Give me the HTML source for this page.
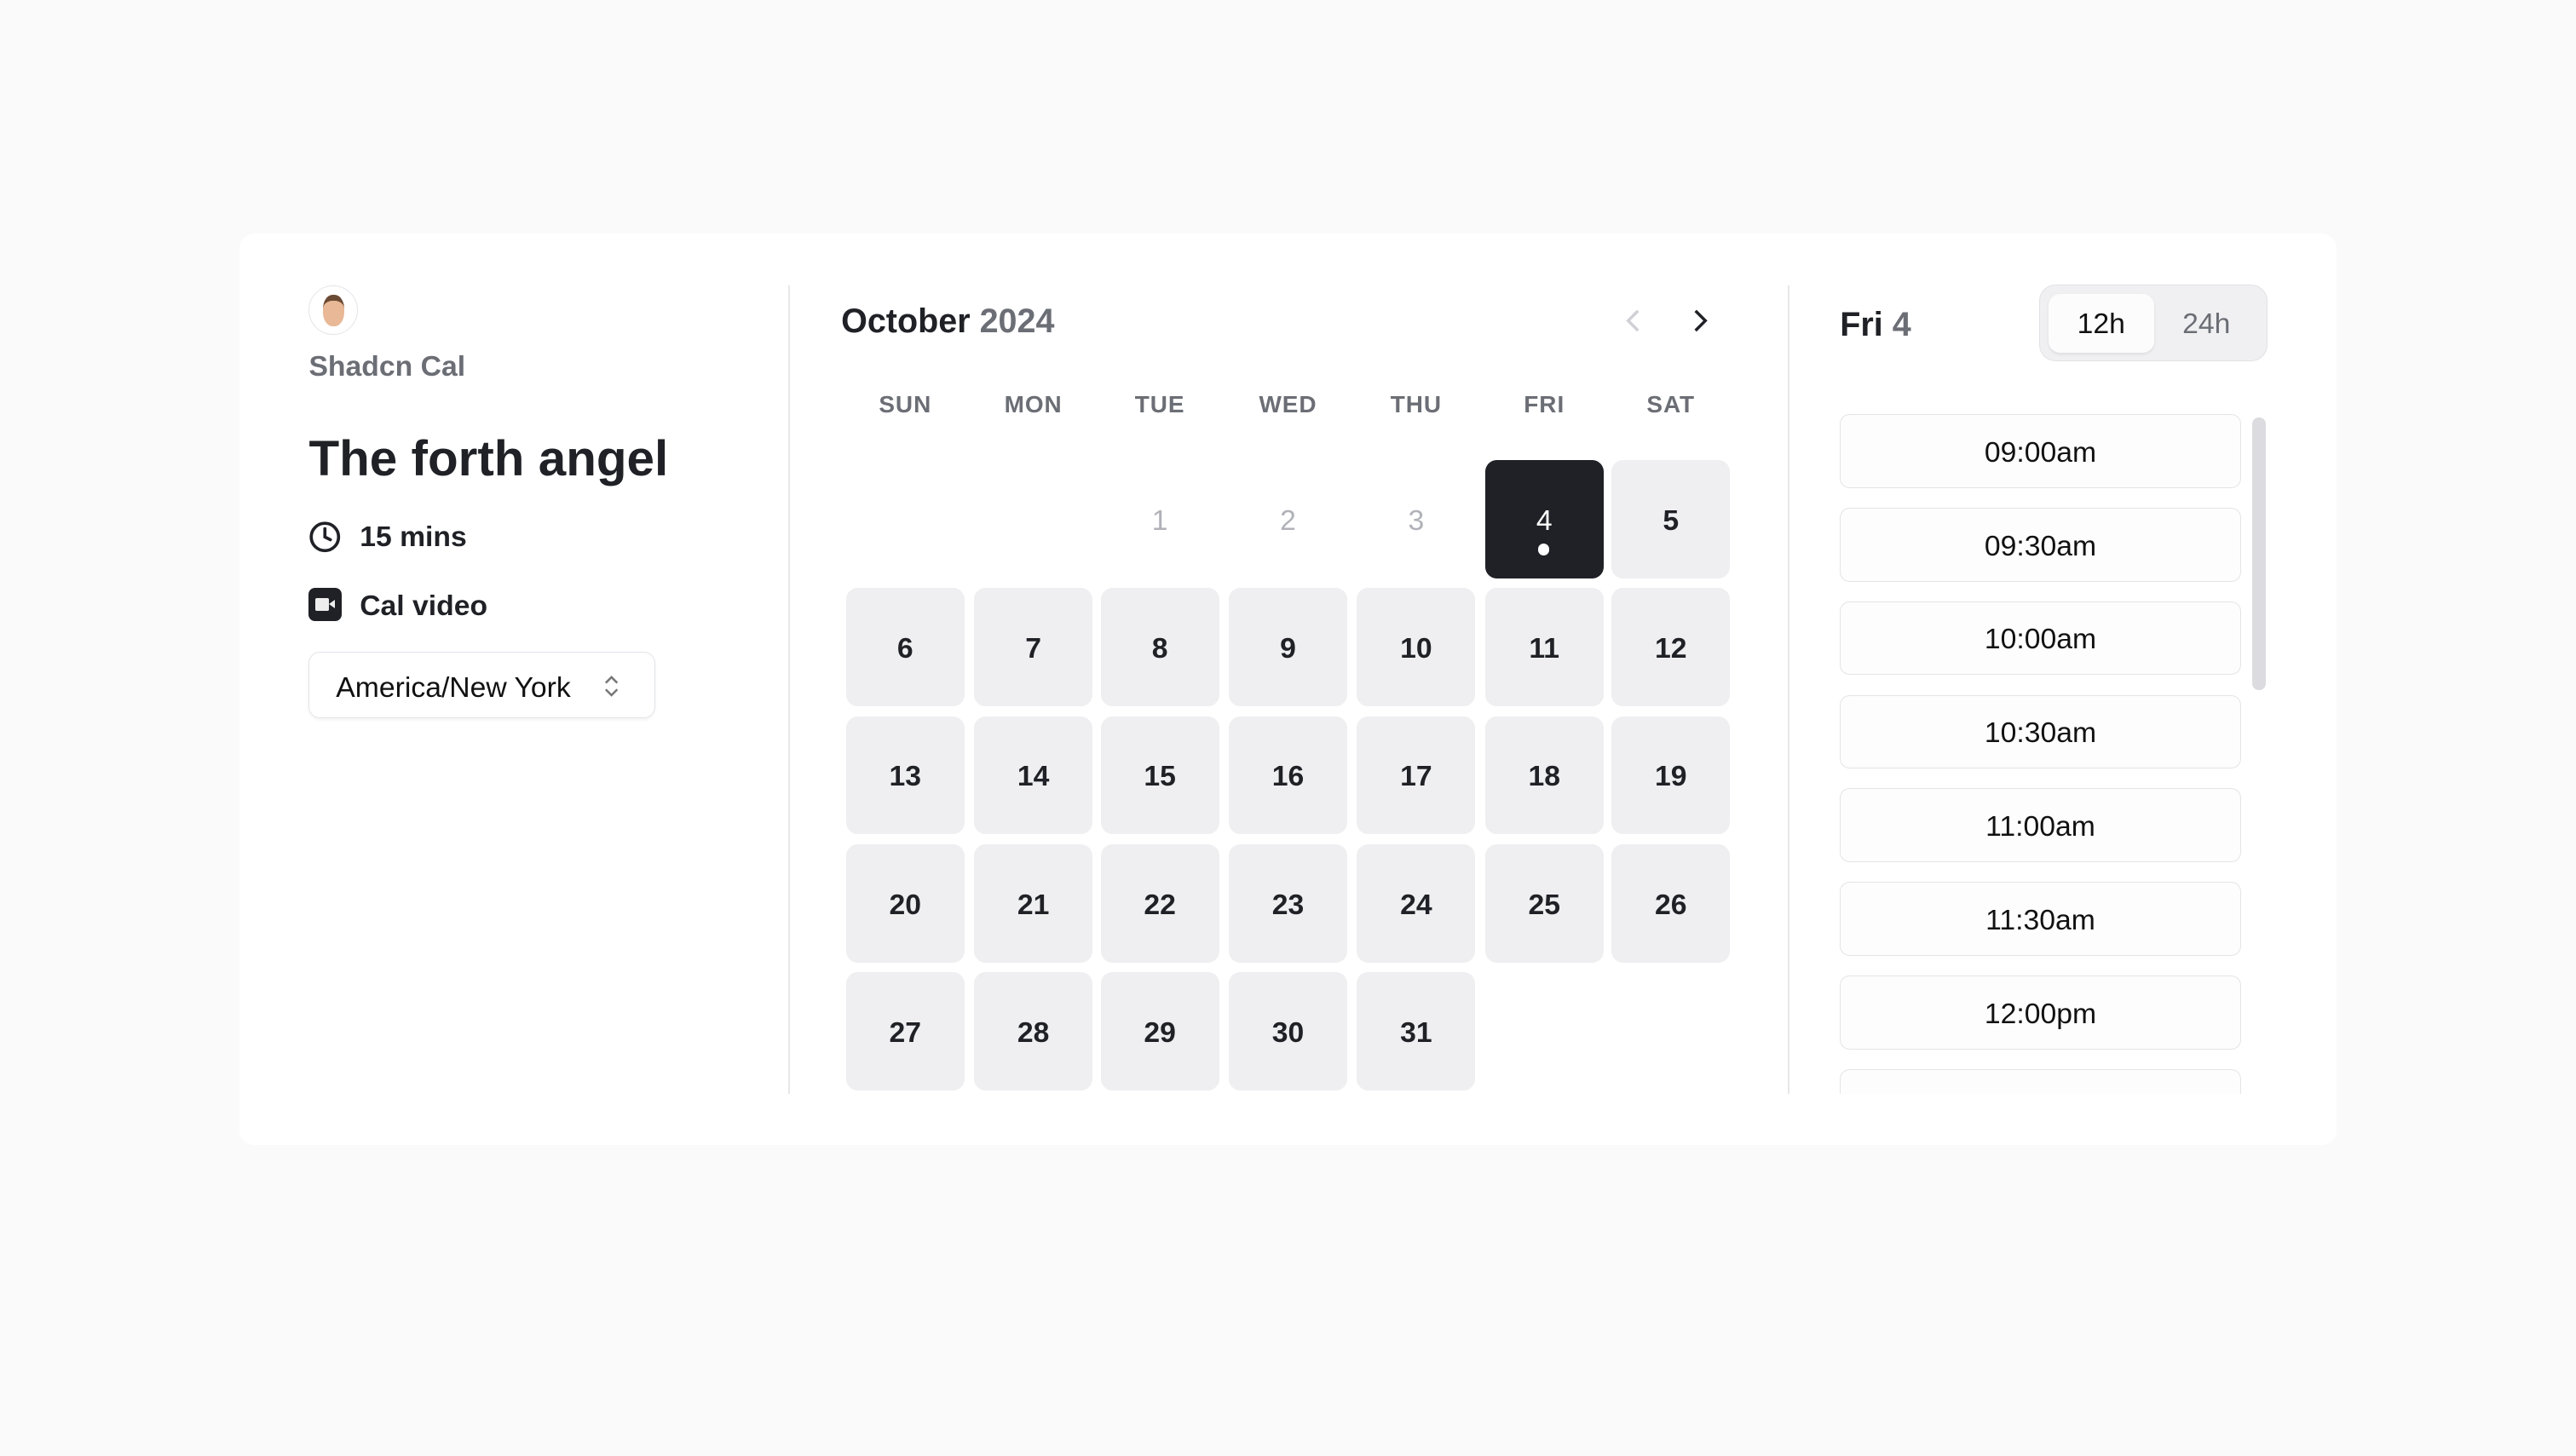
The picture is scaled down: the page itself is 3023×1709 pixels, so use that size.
<!DOCTYPE html>
<html><head><meta charset="utf-8"><style>
html,body{margin:0;padding:0;background:#fafafa;width:3023px;height:1709px;overflow:hidden}
#z{zoom:1.92793;width:1568px;height:886px;position:relative;font-family:"Liberation Sans",sans-serif;color:#1f2126}
.a{position:absolute}
.card{left:146px;top:142px;width:1276px;height:555px;background:#fff;border-radius:9px}
.cell{position:absolute;width:72px;height:72px;border-radius:7px;background:#efeff1;display:flex;align-items:center;justify-content:center;font-size:17.5px;font-weight:bold;color:#1f2126;padding-top:2px;box-sizing:border-box}
.hd{position:absolute;top:238px;width:72px;text-align:center;font-size:14.5px;font-weight:bold;color:#6b6e75;letter-spacing:.5px}
.slot{position:absolute;left:1120px;width:243px;height:44px;border:1px solid #e4e4e7;border-radius:6px;background:#fdfdfd;display:flex;align-items:center;justify-content:center;font-size:17.5px;color:#111;padding-top:2px;box-sizing:content-box}
</style></head><body><div id="z">
<div class="a card"></div>
<div class="a" style="left:188px;top:174px;width:29px;height:29px;border:1px solid #e2e4e8;border-radius:50%;background:#fff;display:flex;align-items:center;justify-content:center">
<div style="width:13px;height:19px;border-radius:45%;background:#e9b896;border-top:4px solid #6b4a34;box-sizing:border-box"></div></div>
<div class="a" style="left:188px;top:213px;font-size:17.5px;font-weight:bold;color:#6b6e75">Shadcn Cal</div>
<div class="a" style="left:188px;top:262px;font-size:30.3px;font-weight:bold;color:#1f2126">The forth angel</div>
<svg class="a" style="left:188px;top:317px" width="20" height="20" viewBox="0 0 24 24" fill="none" stroke="#1f2126" stroke-width="2.3" stroke-linecap="round"><circle cx="12" cy="12" r="10"/><path d="M12 6v6l4 2"/></svg>
<div class="a" style="left:219px;top:317px;font-size:17.5px;font-weight:bold">15 mins</div>
<div class="a" style="left:188px;top:358px;width:20px;height:20px;border-radius:4px;background:#1f2126"><div class="a" style="left:4px;top:6px;width:8px;height:8px;background:#eee;border-radius:1px"></div><div class="a" style="left:12px;top:7px;width:0;height:0;border-top:3px solid transparent;border-bottom:3px solid transparent;border-right:4px solid #eee"></div></div>
<div class="a" style="left:219px;top:359px;font-size:17.5px;font-weight:bold">Cal video</div>
<div class="a" style="left:188px;top:397px;width:210px;height:39px;border:1px solid #e2e4e8;border-radius:7px;box-shadow:0 1px 2px rgba(0,0,0,.05)"><span class="a" style="left:16px;top:11px;font-size:17.5px;color:#111">America/New York</span>
<svg class="a" style="left:178px;top:12px" width="11" height="16" viewBox="0 0 11 16" fill="none" stroke="#777" stroke-width="1.3"><path d="M2 6l3.5-3.5L9 6M2 10l3.5 3.5L9 10"/></svg></div>
<div class="a" style="left:480px;top:174px;width:1px;height:492px;background:#e7e7ea"></div>
<div class="a" style="left:1088px;top:174px;width:1px;height:492px;background:#e7e7ea"></div>
<div class="a" style="left:512px;top:184px;font-size:20.5px;font-weight:bold">October <span style="color:#6b6e75">2024</span></div>
<svg class="a" style="left:987px;top:187px" width="14" height="16" viewBox="0 0 14 16" fill="none" stroke="#d0d0d5" stroke-width="1.8"><path d="M10 2L4 8l6 6"/></svg>
<svg class="a" style="left:1028px;top:187px" width="14" height="16" viewBox="0 0 14 16" fill="none" stroke="#1f2126" stroke-width="1.8"><path d="M4 2l6 6-6 6"/></svg>
<div class="hd" style="left:515px">SUN</div><div class="hd" style="left:593px">MON</div><div class="hd" style="left:670px">TUE</div><div class="hd" style="left:748px">WED</div><div class="hd" style="left:826px">THU</div><div class="hd" style="left:904px">FRI</div><div class="hd" style="left:981px">SAT</div>
<div class="cell" style="left:670px;top:280px;background:none;color:#b0b2b8;font-weight:normal">1</div>
<div class="cell" style="left:748px;top:280px;background:none;color:#b0b2b8;font-weight:normal">2</div>
<div class="cell" style="left:826px;top:280px;background:none;color:#b0b2b8;font-weight:normal">3</div>
<div class="cell" style="left:904px;top:280px;background:#1f2126;color:#fff;font-weight:normal">4<div class="a" style="left:32px;top:51px;width:7px;height:7px;border-radius:50%;background:#fff"></div></div>
<div class="cell" style="left:981px;top:280px">5</div>
<div class="cell" style="left:515px;top:358px">6</div><div class="cell" style="left:593px;top:358px">7</div><div class="cell" style="left:670px;top:358px">8</div><div class="cell" style="left:748px;top:358px">9</div><div class="cell" style="left:826px;top:358px">10</div><div class="cell" style="left:904px;top:358px">11</div><div class="cell" style="left:981px;top:358px">12</div>
<div class="cell" style="left:515px;top:436px">13</div><div class="cell" style="left:593px;top:436px">14</div><div class="cell" style="left:670px;top:436px">15</div><div class="cell" style="left:748px;top:436px">16</div><div class="cell" style="left:826px;top:436px">17</div><div class="cell" style="left:904px;top:436px">18</div><div class="cell" style="left:981px;top:436px">19</div>
<div class="cell" style="left:515px;top:514px">20</div><div class="cell" style="left:593px;top:514px">21</div><div class="cell" style="left:670px;top:514px">22</div><div class="cell" style="left:748px;top:514px">23</div><div class="cell" style="left:826px;top:514px">24</div><div class="cell" style="left:904px;top:514px">25</div><div class="cell" style="left:981px;top:514px">26</div>
<div class="cell" style="left:515px;top:592px">27</div><div class="cell" style="left:593px;top:592px">28</div><div class="cell" style="left:670px;top:592px">29</div><div class="cell" style="left:748px;top:592px">30</div><div class="cell" style="left:826px;top:592px">31</div>
<div class="a" style="left:1120px;top:186px;font-size:20.5px;font-weight:bold">Fri <span style="color:#6b6e75">4</span></div>
<div class="a" style="left:1241px;top:173px;width:138px;height:46px;border:1px solid #e2e2e6;border-radius:10px;background:#f0f0f2"></div>
<div class="a" style="left:1247px;top:179px;width:64px;height:36px;border-radius:7px;background:#fcfcfc;box-shadow:0 1px 2px rgba(0,0,0,.08);text-align:center;line-height:37px;font-size:17.5px;color:#111">12h</div>
<div class="a" style="left:1311px;top:179px;width:64px;height:36px;text-align:center;line-height:37px;font-size:17.5px;color:#6b6e75">24h</div>
<div class="a" style="left:1100px;top:240px;width:300px;height:426px;overflow:hidden">
<div style="position:relative;left:-1100px;top:-240px">
<div class="slot" style="top:252px;height:42px">09:00am</div><div class="slot" style="top:309px;height:42px">09:30am</div><div class="slot" style="top:366px;height:42px">10:00am</div><div class="slot" style="top:423px;height:42px">10:30am</div><div class="slot" style="top:480px;height:42px">11:00am</div><div class="slot" style="top:537px;height:42px">11:30am</div><div class="slot" style="top:594px;height:42px">12:00pm</div><div class="slot" style="top:651px;height:42px">12:30pm</div>
<div class="a" style="left:1371px;top:254px;width:8px;height:166px;border-radius:4px;background:#dcdce0"></div>
</div></div>
</div></body></html>
